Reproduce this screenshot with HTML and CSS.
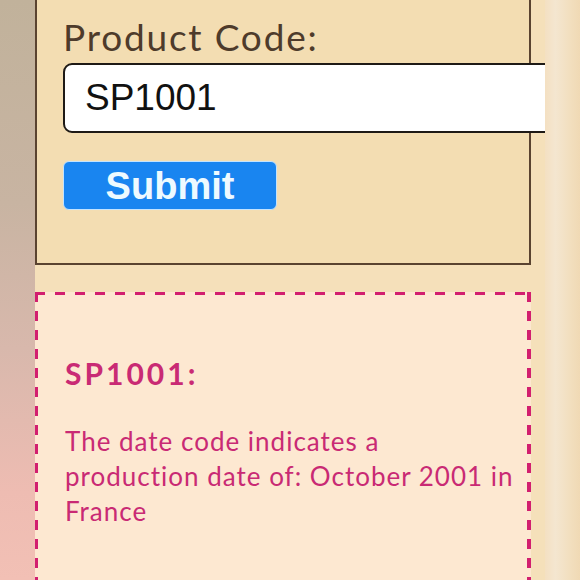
FILE: index.html
```html
<!DOCTYPE html>
<html lang="en">
<head>
<meta charset="utf-8">
<title>Date Code Lookup</title>
<link rel="stylesheet" href="styles.css">
</head>
<body>
<div class="stage">
  <div class="side side-left"></div>
  <main class="screen">
    <form class="form-box">
      <label class="field-label" for="code">Product Code:</label>
      <input class="field-input" id="code" type="text" value="SP1001">
      <button class="submit-btn" type="button">Submit</button>
    </form>
    <section class="result">
      <h2 class="result-title">SP1001:</h2>
      <p class="result-text">The date code indicates a production date of: October 2001 in France</p>
    </section>
  </main>
  <div class="side side-right"></div>
</div>
</body>
</html>
```

FILE: styles.css
```css
* { box-sizing: border-box; }
html, body { margin: 0; padding: 0; }
body {
  width: 580px;
  height: 580px;
  overflow: hidden;
  background: #f5e0ba;
}
.stage {
  display: flex;
  width: 580px;
  height: 580px;
}
.side { flex: 0 0 35px; height: 100%; }
.side-left {
  background: linear-gradient(180deg, #c1b29b 0%, #c8b4a2 35%, #d8b8ac 60%, #eebcb2 85%, #f2c0b5 100%);
}
.side-right {
  background: linear-gradient(90deg, #f4e0c2 0%, #f4e6d0 30%, #f2dfbf 70%, #f0d9b4 100%);
}
.screen {
  flex: 0 0 510px;
  overflow: hidden;
  padding-right: 14px;
  background: #f5e0ba;
  display: flex;
  flex-direction: column;
  gap: 27px;
}
.form-box {
  flex: 0 0 auto;
  margin: -2px 0 0 0;
  background: #f3ddb2;
  border: 2px solid #5a4330;
  padding: 17px 0 53px 26px;
  display: flex;
  flex-direction: column;
  align-items: flex-start;
}
.field-label {
  font-family: Lato, "Open Sans", sans-serif;
  font-size: 37px;
  line-height: 40px;
  letter-spacing: 1.8px;
  color: #4e3b2b;
}
.field-input {
  margin-top: 6px;
  width: 500px;
  height: 70px;
  border: 2px solid #1e1a16;
  border-radius: 9px;
  background: #fff;
  padding: 0 0 0 20px;
  font-family: "Liberation Sans", Arial, sans-serif;
  font-size: 37px;
  color: #111;
  outline: none;
}
.submit-btn {
  margin-top: 28px;
  width: 214px;
  height: 49px;
  border: 1px solid #c2e3ff;
  border-radius: 6px;
  background: #1985f0;
  color: #eefaff;
  font-family: "Liberation Sans", Arial, sans-serif;
  font-weight: bold;
  font-size: 38px;
  line-height: 1;
  padding: 0;
}
.result {
  flex: 0 0 340px;
  background:
    repeating-linear-gradient(90deg, #d21f6f 0 10px, transparent 10px 20px) left top / 100% 3px no-repeat,
    repeating-linear-gradient(90deg, #d21f6f 0 10px, transparent 10px 20px) left bottom / 100% 3px no-repeat,
    repeating-linear-gradient(180deg, #d21f6f 0 10px, transparent 10px 19px) left top / 3px 100% no-repeat,
    repeating-linear-gradient(180deg, #d21f6f 0 10px, transparent 10px 19px) right top / 4px 100% no-repeat,
    #fde8d1;
  padding: 63px 14px 40px 30px;
  color: #c92a74;
  font-family: Lato, "Open Sans", sans-serif;
}
.result-title {
  margin: 0;
  font-size: 30px;
  line-height: 36px;
  font-weight: bold;
  letter-spacing: 3px;
}
.result-text {
  margin: 33px 0 0 0;
  font-size: 26px;
  line-height: 35px;
  letter-spacing: 1px;
}
```
